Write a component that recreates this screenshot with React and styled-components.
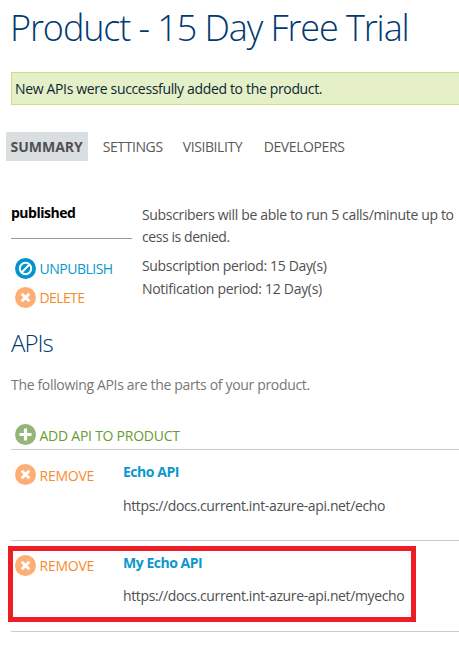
import React from 'react';
import styled, { createGlobalStyle } from 'styled-components';

const GlobalStyle = createGlobalStyle`
  * { box-sizing: border-box; }
  html, body { margin: 0; background: #fff; overflow: hidden; }
  body {
    font-family: "Open Sans", "Noto Sans", sans-serif;
    font-size: 14px;
    line-height: 22px;
    letter-spacing: -0.34px;
    color: #505050;
  }
`;

const Page = styled.main`
  width: 459px;
  height: 645px;
  padding-left: 11px;
  overflow: hidden;
  white-space: nowrap;
`;

const Title = styled.h1`
  margin: 0 0 0 -1px;
  height: 72px;
  font-size: 36px;
  font-weight: 300;
  line-height: 56px;
  letter-spacing: -1.1px;
  color: #003a70;
`;

const Notice = styled.div`
  height: 33px;
  margin-right: -4px;
  padding-left: 3px;
  border: 1px solid #cbe086;
  background: #e6f0c8;
  color: #0c2733;
  line-height: 32px;
`;

const Tabs = styled.nav`
  display: flex;
  margin: 27px 0 0 -5px;
  height: 29px;
  gap: 10px;
`;

const Tab = styled.a`
  flex: none;
  width: ${(p) => p.$width}px;
  padding-left: ${(p) => (p.$active ? 4.5 : 4.7)}px;
  line-height: 30px;
  letter-spacing: ${(p) => (p.$active ? '0' : '-0.4px')};
  font-weight: ${(p) => (p.$active ? 700 : 400)};
  background: ${(p) => (p.$active ? '#d9dee1' : 'transparent')};
  color: ${(p) => (p.$active ? '#505050' : '#5a5a5a')};
`;

const Summary = styled.section`
  display: grid;
  grid-template-columns: 121px 1fr;
  column-gap: 10px;
  height: 168px;
  padding-top: 41px;
`;

const Status = styled.div`
  height: 37px;
  margin-bottom: 19px;
  border-bottom: 1px solid #999;
  color: #000;
  font-weight: 700;
  letter-spacing: -0.5px;
`;

const Actions = styled.div`
  display: grid;
  gap: 8px;
`;

const Details = styled.div`
  padding-top: 2px;
`;

const Line = styled.p`
  margin: 0 0 ${(p) => p.$gap || 0}px;
  letter-spacing: ${(p) => p.$spacing || -0.34}px;
`;

const ActionLink = styled.a`
  display: flex;
  align-items: center;
  gap: 3.5px;
  height: 21px;
  padding-left: 4px;
  letter-spacing: ${(p) => p.$spacing || -0.33}px;
  color: ${(p) => p.$color};

  svg { flex: none; }
`;

const ActionText = styled.span`
  padding-top: ${(p) => (p.$drop || 0) * 2}px;
`;

const Heading = styled.h2`
  margin: 0;
  height: 45px;
  font-size: 24px;
  font-weight: 300;
  line-height: 28px;
  letter-spacing: -1px;
  color: #003a70;
`;

const Intro = styled.p`
  margin: 0;
  height: 50px;
  color: #777;
  letter-spacing: -0.33px;
`;

const ApiList = styled.ul`
  list-style: none;
  margin: 4px 0 0;
  padding: 0;
  border-top: 1px solid #ccc;
`;

const ApiRow = styled.li`
  display: grid;
  grid-template-columns: 112px 1fr;
  height: 91px;
  padding-top: 14px;
  border-bottom: 1px solid #ccc;
  position: relative;
`;

const ApiInfo = styled.div`
  margin-top: -3px;
`;

const ApiName = styled.a`
  display: block;
  height: ${(p) => (p.$compact ? 32 : 33)}px;
  font-weight: 700;
  letter-spacing: -0.47px;
  color: #0a98cd;
`;

const ApiUrl = styled.div`
  padding-top: 1px;
  letter-spacing: -0.37px;
`;

const Highlight = styled.div`
  position: absolute;
  left: -3px;
  top: 5px;
  width: 408px;
  height: 76px;
  border: 5px solid #ee1c25;
`;

const icons = {
  ban: (
    <>
      <circle cx="10.5" cy="10.5" r="5.7" fill="none" stroke="#fff" strokeWidth="2" />
      <path d="M6.8 14.2 14.2 6.8" stroke="#fff" strokeWidth="2" />
    </>
  ),
  cross: <path d="m6.7 6.7 7.6 7.6M14.3 6.7l-7.6 7.6" stroke="#fff" strokeWidth="3" />,
  plus: <path d="M10.5 4.5v12M4.5 10.5h12" stroke="#fff" strokeWidth="3.2" />,
};

function Action({ icon, fill, color, drop, spacing, children }) {
  return (
    <ActionLink $color={color} $spacing={spacing}>
      <svg width="21" height="21" viewBox="0 0 21 21">
        <circle cx="10.5" cy="10.5" r="10.5" fill={fill} />
        {icons[icon]}
      </svg>
      <ActionText $drop={drop}>{children}</ActionText>
    </ActionLink>
  );
}

const apis = [
  { name: 'Echo API', url: 'https://docs.current.int-azure-api.net/echo' },
  { name: 'My Echo API', url: 'https://docs.current.int-azure-api.net/myecho', marked: true },
];

export default function App() {
  return (
    <Page>
      <GlobalStyle />
      <Title>Product - 15 Day Free Trial</Title>
      <Notice>New APIs were successfully added to the product.</Notice>
      <Tabs>
        <Tab $active $width={82}>SUMMARY</Tab>
        <Tab $width={70}>SETTINGS</Tab>
        <Tab $width={71}>VISIBILITY</Tab>
        <Tab $width={90}>DEVELOPERS</Tab>
      </Tabs>
      <Summary>
        <div>
          <Status>published</Status>
          <Actions>
            <Action icon="ban" fill="#0096cd" color="#0a98cd" spacing={-0.5}>UNPUBLISH</Action>
            <Action icon="cross" fill="#fdae74" color="#f68b2b" spacing={-0.6}>DELETE</Action>
          </Actions>
        </div>
        <Details>
          <Line>Subscribers will be able to run 5 calls/minute up to</Line>
          <Line $gap={7} $spacing={-0.42}>cess is denied.</Line>
          <Line $gap={1}>Subscription period: 15 Day(s)</Line>
          <Line $spacing={-0.3}>Notification period: 12 Day(s)</Line>
        </Details>
      </Summary>
      <Heading>APIs</Heading>
      <Intro>The following APIs are the parts of your product.</Intro>
      <Action icon="plus" fill="#93b578" color="#689b35" drop={1} spacing={-0.25}>ADD API TO PRODUCT</Action>
      <ApiList>
        {apis.map((api) => (
          <ApiRow key={api.name}>
            <Action icon="cross" fill="#fdae74" color="#f68b2b" drop={api.marked ? 0 : 1} spacing={-0.25}>REMOVE</Action>
            <ApiInfo>
              <ApiName $compact={api.marked}>{api.name}</ApiName>
              <ApiUrl>{api.url}</ApiUrl>
            </ApiInfo>
            {api.marked && <Highlight />}
          </ApiRow>
        ))}
      </ApiList>
    </Page>
  );
}
